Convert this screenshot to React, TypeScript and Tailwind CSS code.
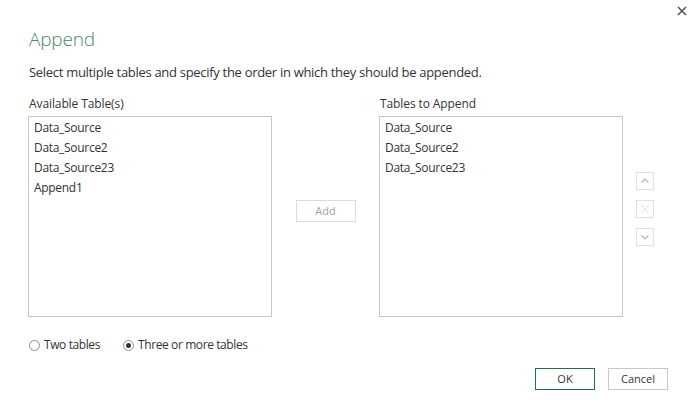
import React from "react";

const items = ["Data_Source", "Data_Source2", "Data_Source23", "Append1"];
const right = ["Data_Source", "Data_Source2", "Data_Source23"];

function ListBox({ rows }: { rows: string[] }) {
  return (
    <div className="h-[201px] w-[244px] border border-[#c6c6c6] pl-[5px] pt-px">
      {rows.map((r) => (
        <div key={r} className="text-[12px] leading-[20px] tracking-[-0.3px] text-[#333]">
          {r}
        </div>
      ))}
    </div>
  );
}

function SmallBtn({ children }: { children: React.ReactNode }) {
  return (
    <div className="w-[18px] h-[18px] border border-[#e0e0e0] flex items-center justify-center">
      {children}
    </div>
  );
}

export default function App() {
  return (
    <div className="relative w-[695px] h-[417px] bg-white text-[#444] font-['Segoe_UI','Open_Sans',sans-serif] overflow-hidden">
      <svg className="absolute left-[677px] top-[6px]" width="10" height="10" viewBox="0 0 10 10">
        <path d="M1 1L9 9M9 1L1 9" stroke="#555" strokeWidth="1.6" />
      </svg>
      <div className="pl-[28px] pt-[25px]">
        <h1 className="pl-px text-[19px] leading-[28px] font-light tracking-[-0.2px] text-[#4a8a68]">Append</h1>
        <p className="pl-px mt-[9px] text-[13px] leading-[20px] tracking-[-0.3px] text-[#333]">
          Select multiple tables and specify the order in which they should be appended.
        </p>
        <div className="flex mt-[12px]">
          <div className="flex flex-col">
            <div className="pl-px text-[12px] leading-[18px] mt-px mb-[3px] tracking-[-0.1px] text-[#333]">Available Table(s)</div>
            <ListBox rows={items} />
          </div>
          <div className="w-[107px] flex justify-center pt-[106px]">
            <div className="w-[60px] h-[22px] border border-[#dcdcdc] flex items-center justify-center text-[11px] text-[#a0a0a0]">
              Add
            </div>
          </div>
          <div className="flex flex-col">
            <div className="pl-px text-[12px] leading-[18px] mt-px mb-[3px] tracking-[-0.1px] text-[#333]">Tables to Append</div>
            <ListBox rows={right} />
          </div>
          <div className="pl-[13px] pt-[78px] flex flex-col gap-[10px]">
            <SmallBtn>
              <svg width="10" height="10" viewBox="0 0 10 10">
                <path d="M1.5 6.5L5 3L8.5 6.5" stroke="#b5b5b5" strokeWidth="1.2" fill="none" />
              </svg>
            </SmallBtn>
            <SmallBtn>
              <svg width="10" height="10" viewBox="0 0 10 10">
                <path d="M1 1L9 9M9 1L1 9" stroke="#e2e2e2" strokeWidth="1" fill="none" />
              </svg>
            </SmallBtn>
            <SmallBtn>
              <svg width="10" height="10" viewBox="0 0 10 10">
                <path d="M1.5 3.5L5 7L8.5 3.5" stroke="#b5b5b5" strokeWidth="1.2" fill="none" />
              </svg>
            </SmallBtn>
          </div>
        </div>
        <div className="flex items-center mt-[18px] h-[20px] text-[12px] tracking-[-0.4px] text-[#333]">
          <div className="flex items-center">
            <span className="w-[11px] h-[11px] rounded-full border border-[#8a8a8a] ml-px" />
            <span className="ml-[4px]">Two tables</span>
          </div>
          <div className="flex items-center ml-[23px]">
            <span className="w-[11px] h-[11px] rounded-full border border-[#8a8a8a] flex items-center justify-center">
              <span className="w-[5px] h-[5px] rounded-full bg-[#333]" />
            </span>
            <span className="ml-[4px]">Three or more tables</span>
          </div>
        </div>
        <div className="flex justify-end mt-[13px] pr-[27px] gap-[13px]">
          <div className="w-[60px] h-[22px] border border-[#217346] flex items-center justify-center text-[11px] text-[#333]">
            OK
          </div>
          <div className="w-[60px] h-[22px] border border-[#c8c8c8] flex items-center justify-center text-[11px] text-[#333]">
            Cancel
          </div>
        </div>
      </div>
    </div>
  );
}
